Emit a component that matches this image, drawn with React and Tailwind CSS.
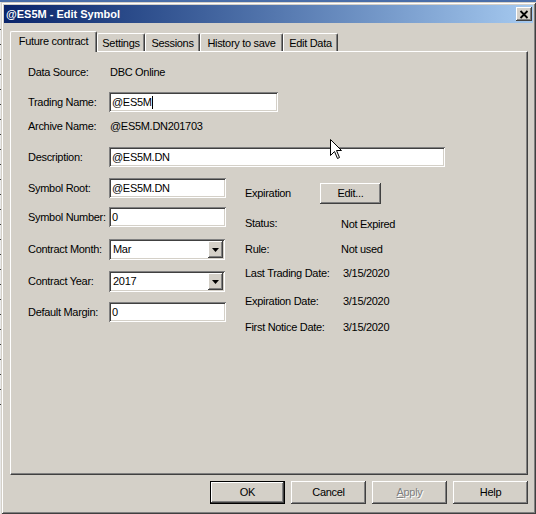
import React from "react";

const sunken =
  "bg-white shadow-[inset_1px_1px_0_#808080,inset_-1px_-1px_0_#ffffff,inset_2px_2px_0_#404040,inset_-2px_-2px_0_#d4d0c8]";
const raised =
  "bg-[#d4d0c8] shadow-[inset_-1px_-1px_0_#404040,inset_1px_1px_0_#ffffff,inset_-2px_-2px_0_#808080,inset_2px_2px_0_#d4d0c8]";

function Field({ w, h = "h-[20px]", children, caret }) {
  return (
    <div className={`${sunken} ${w} ${h} flex items-center pl-[3px]`}>
      <span className="leading-[13px]">{children}</span>
      {caret && <span className="w-px h-[13px] bg-black" />}
    </div>
  );
}

function Select({ w, children }) {
  return (
    <div className={`${sunken} ${w} h-[21px] flex items-center pl-[4px] pr-[2px]`}>
      <span className="flex-1 leading-[13px]">{children}</span>
      <div className={`${raised} w-[15px] h-[17px] flex items-center justify-center`}>
        <svg width="7" height="4" viewBox="0 0 7 4">
          <path d="M0 0 H7 L3.5 4 Z" fill="black" />
        </svg>
      </div>
    </div>
  );
}

function LabelRow({ label, lw, mt, children, h = "h-[20px]" }) {
  return (
    <div className={`flex items-center ${h} ${mt}`}>
      <div className={`${lw} leading-[13px] shrink-0 whitespace-nowrap`}>{label}</div>
      {children}
    </div>
  );
}

function Tab({ w, children, selected }) {
  if (selected)
    return (
      <div
        className={`${w} h-[21px] mb-[-1px] relative z-10 bg-[#d4d0c8] border-t border-l border-white border-r border-r-[#404040] rounded-t-[2px] flex justify-center pt-[3px] leading-[13px] whitespace-nowrap shadow-[inset_-1px_0_0_#808080]`}
      >
        {children}
      </div>
    );
  return (
    <div
      className={`${w} h-[18px] bg-[#d4d0c8] border-t border-l border-white border-r border-r-[#404040] rounded-t-[2px] flex justify-center pt-[3px] leading-[13px] whitespace-nowrap shadow-[inset_-1px_0_0_#808080]`}
    >
      {children}
    </div>
  );
}

function Btn({ children, def, disabled }) {
  if (def)
    return (
      <div className="w-[75px] h-[23px] border border-black">
        <div className={`${raised} w-full h-full flex items-center justify-center leading-[13px]`}>
          {children}
        </div>
      </div>
    );
  return (
    <div
      className={`${raised} w-[75px] h-[23px] flex items-center justify-center leading-[13px] ${
        disabled ? "text-[#808080] [text-shadow:1px_1px_0_#ffffff]" : ""
      }`}
    >
      {children}
    </div>
  );
}

export default function App() {
  return (
    <div className="relative w-[536px] h-[514px] overflow-hidden bg-[#d4d0c8] flex flex-col font-['Liberation_Sans',Arial,sans-serif] text-[11px] text-black">
      <div className="h-[2px] bg-[#4a6ea8] shrink-0" />
      <div className="flex flex-1">
        <div className="w-[1px] bg-[#e8e8e8] flex flex-col gap-[14px] pt-[27px]">
          {Array.from({ length: 26 }).map((_, i) => (
            <div key={i} className="h-px bg-[#404040]" />
          ))}
        </div>
        <div className="flex-1 p-[3px] shadow-[inset_1px_1px_0_#d4d0c8,inset_-1px_-1px_0_#404040,inset_2px_2px_0_#ffffff,inset_-2px_-2px_0_#808080] flex flex-col">
          <div className="h-[18px] bg-linear-to-r from-[#0a246a] to-[#a6caf0] flex items-center justify-between pl-[2px] pr-[1px]">
            <span className="text-white font-bold text-[11px] leading-[13px]">@ES5M - Edit Symbol</span>
            <div className={`${raised} w-[16px] h-[14px] flex items-center justify-center`}>
              <svg width="10" height="9" viewBox="0 0 10 9">
                <path d="M1.5 1 L8.5 8 M8.5 1 L1.5 8" stroke="black" strokeWidth="1.8" />
              </svg>
            </div>
          </div>

          <div className="tracking-[-0.3px] flex flex-col">
            <div className="mt-[8px] ml-[6px] h-[20px] flex items-end">
              <Tab w="w-[87px]" selected>Future contract</Tab>
              <Tab w="w-[48px]">Settings</Tab>
              <Tab w="w-[55px]">Sessions</Tab>
              <Tab w="w-[83px]">History to save</Tab>
              <Tab w="w-[55px]">Edit Data</Tab>
            </div>

            <div className="ml-[6px] w-[518px] h-[424px] border-l border-t border-white border-r border-b border-r-[#404040] border-b-[#404040] shadow-[inset_-1px_-1px_0_#808080] pl-[17px] pt-[10px]">
              <LabelRow label="Data Source:" lw="w-[82px]">
                <span className="leading-[13px]">DBC Online</span>
              </LabelRow>
              <LabelRow label="Trading Name:" lw="w-[81px]" mt="mt-[10px]">
                <Field w="w-[169px]" caret>@ES5M</Field>
              </LabelRow>
              <LabelRow label="Archive Name:" lw="w-[82px]" mt="mt-[4px]">
                <span className="leading-[13px]">@ES5M.DN201703</span>
              </LabelRow>
              <LabelRow label="Description:" lw="w-[81px]" mt="mt-[11px]">
                <Field w="w-[336px]">@ES5M.DN</Field>
              </LabelRow>

              <div className="mt-[11px] flex">
                <div className="w-[198px] flex flex-col">
                  <LabelRow label="Symbol Root:" lw="w-[81px]">
                    <Field w="w-[117px]">@ES5M.DN</Field>
                  </LabelRow>
                  <LabelRow label="Symbol Number:" lw="w-[81px]" mt="mt-[9px]">
                    <Field w="w-[117px]">0</Field>
                  </LabelRow>
                  <LabelRow label="Contract Month:" lw="w-[81px]" mt="mt-[12px]" h="h-[21px]">
                    <Select w="w-[116px]">Mar</Select>
                  </LabelRow>
                  <LabelRow label="Contract Year:" lw="w-[81px]" mt="mt-[11px]" h="h-[21px]">
                    <Select w="w-[116px]">2017</Select>
                  </LabelRow>
                  <LabelRow label="Default Margin:" lw="w-[81px]" mt="mt-[10px]">
                    <Field w="w-[117px]">0</Field>
                  </LabelRow>
                </div>

                <div className="ml-[19px] flex flex-col">
                  <LabelRow label="Expiration" lw="w-[75px]" mt="mt-[5px]" h="h-[21px]">
                    <div className={`${raised} w-[61px] h-[21px] flex items-center justify-center leading-[13px]`}>
                      Edit...
                    </div>
                  </LabelRow>
                  <LabelRow label="Status:" lw="w-[96px]" mt="mt-[9px]">
                    <span className="leading-[13px] pt-[2px]">Not Expired</span>
                  </LabelRow>
                  <LabelRow label="Rule:" lw="w-[96px]" mt="mt-[6px]">
                    <span className="leading-[13px]">Not used</span>
                  </LabelRow>
                  <LabelRow label="Last Trading Date:" lw="w-[98px]" mt="mt-[4px]">
                    <span className="leading-[13px]">3/15/2020</span>
                  </LabelRow>
                  <LabelRow label="Expiration Date:" lw="w-[98px]" mt="mt-[8px]">
                    <span className="leading-[13px]">3/15/2020</span>
                  </LabelRow>
                  <LabelRow label="First Notice Date:" lw="w-[98px]" mt="mt-[6px]">
                    <span className="leading-[13px]">3/15/2020</span>
                  </LabelRow>
                </div>
              </div>
            </div>

            <div className="mt-[6px] flex justify-end gap-[6px] pr-[5px]">
              <Btn def>OK</Btn>
              <Btn>Cancel</Btn>
              <Btn disabled>
                <span>
                  <span className="underline">A</span>pply
                </span>
              </Btn>
              <Btn>Help</Btn>
            </div>
          </div>
        </div>
      </div>

      <svg
        className="absolute left-[330px] top-[139px]"
        width="13"
        height="21"
        viewBox="0 0 13 21"
      >
        <path
          d="M0.5 0.5 L0.5 16.5 L4.5 12.5 L7.5 19.5 L9.5 18.5 L6.5 11.5 L11.5 11.5 Z"
          fill="white"
          stroke="black"
          strokeWidth="1"
        />
      </svg>
    </div>
  );
}
